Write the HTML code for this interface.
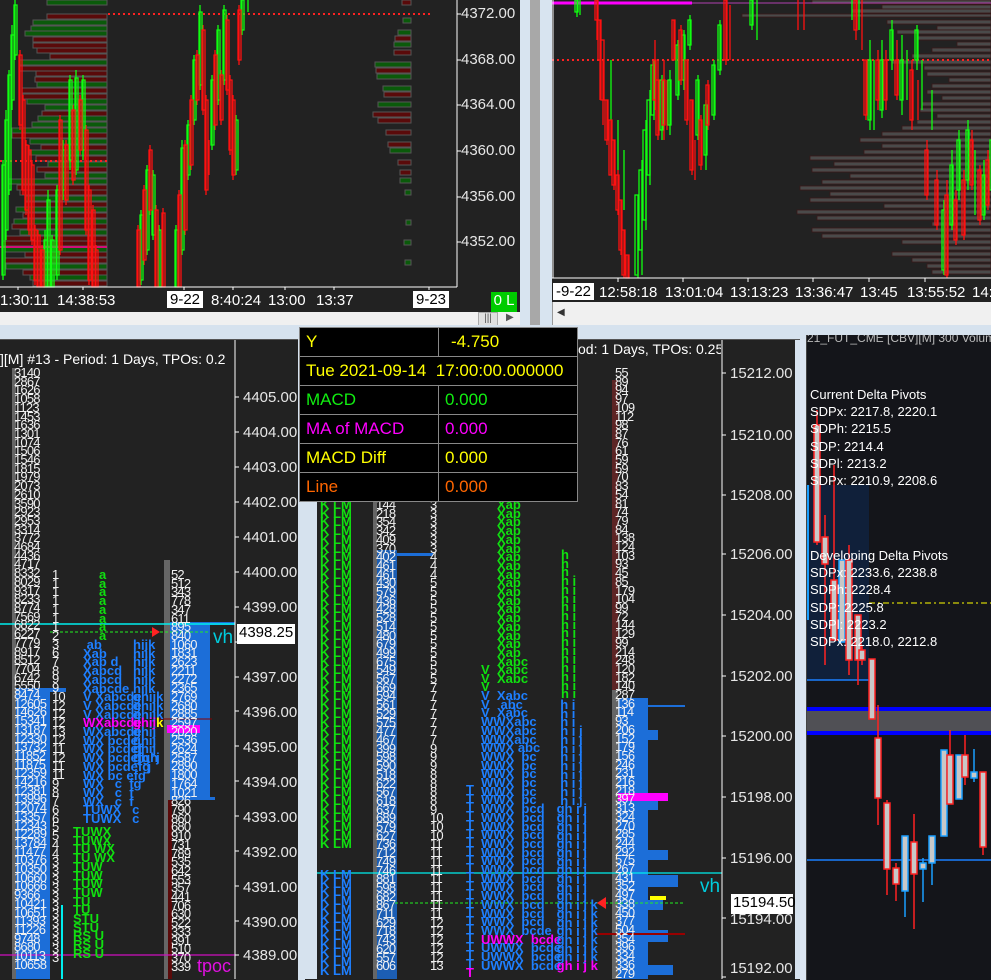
<!DOCTYPE html>
<html style="height:980px;overflow:hidden"><head><meta charset="utf-8">
<style>
*{margin:0;padding:0;box-sizing:border-box}
body{width:991px;height:980px;overflow:hidden;background:#dbe5f1;font-family:"Liberation Sans",sans-serif;position:relative}
.a{position:absolute}
.pl{position:absolute;color:#e6e6e6;font-size:15px;white-space:nowrap}
.tl{position:absolute;color:#fff;font-size:15px;white-space:nowrap;top:292px}
pre{position:absolute;font-family:"Liberation Sans",sans-serif;font-size:13px;line-height:8.7px;white-space:pre;letter-spacing:-0.8px}
.w{color:#f0f0f0}.g{color:#10e010}.b{color:#1e7fff}.y{color:#ffff00}.m{color:#ff00ff}
.L{font-weight:bold;font-size:13px;letter-spacing:0}
.tt td{border:1px solid #888;height:29px;font-size:17px;padding-left:6px;white-space:nowrap}
.clip{position:absolute;overflow:hidden}
</style></head><body>

<!-- TOP LEFT PANE -->
<div class="a" style="left:0;top:0;width:520px;height:312px;background:#222"></div>
<svg class="a" style="left:0;top:0" width="520" height="290">
<g stroke="#555" stroke-width="1">
<rect x="47" y="0" width="60" height="5" fill="#0a5a0a"/><rect x="47" y="14" width="60" height="5" fill="#5a0a0a"/><rect x="33" y="20" width="74" height="5" fill="#0a5a0a"/><rect x="31" y="26" width="76" height="5" fill="#0a5a0a"/><rect x="25" y="31" width="82" height="5" fill="#0a5a0a"/><rect x="33" y="37" width="74" height="5" fill="#5a0a0a"/><rect x="33" y="43" width="74" height="5" fill="#5a0a0a"/><rect x="37" y="48" width="70" height="5" fill="#5a0a0a"/><rect x="50" y="54" width="57" height="5" fill="#5a0a0a"/><rect x="20" y="60" width="87" height="5" fill="#0a5a0a"/><rect x="20" y="66" width="87" height="5" fill="#5a0a0a"/><rect x="36" y="71" width="71" height="5" fill="#5a0a0a"/><rect x="35" y="77" width="72" height="5" fill="#5a0a0a"/><rect x="37" y="82" width="70" height="5" fill="#0a5a0a"/><rect x="22" y="88" width="85" height="5" fill="#5a0a0a"/><rect x="23" y="94" width="84" height="5" fill="#5a0a0a"/><rect x="27" y="99" width="80" height="5" fill="#0a5a0a"/><rect x="45" y="105" width="62" height="5" fill="#0a5a0a"/><rect x="42" y="111" width="65" height="5" fill="#5a0a0a"/><rect x="38" y="116" width="69" height="5" fill="#0a5a0a"/><rect x="32" y="122" width="75" height="5" fill="#0a5a0a"/><rect x="12" y="128" width="95" height="5" fill="#0a5a0a"/><rect x="12" y="133" width="95" height="5" fill="#5a0a0a"/><rect x="30" y="139" width="77" height="5" fill="#0a5a0a"/><rect x="41" y="145" width="66" height="5" fill="#5a0a0a"/><rect x="30" y="150" width="77" height="5" fill="#0a5a0a"/><rect x="36" y="156" width="71" height="5" fill="#5a0a0a"/><rect x="48" y="162" width="59" height="5" fill="#0a5a0a"/><rect x="37" y="167" width="70" height="5" fill="#5a0a0a"/><rect x="45" y="173" width="62" height="5" fill="#0a5a0a"/><rect x="8" y="179" width="99" height="5" fill="#0a5a0a"/><rect x="17" y="185" width="90" height="5" fill="#5a0a0a"/><rect x="20" y="190" width="87" height="5" fill="#5a0a0a"/><rect x="26" y="196" width="81" height="5" fill="#0a5a0a"/><rect x="26" y="202" width="81" height="5" fill="#5a0a0a"/><rect x="16" y="207" width="91" height="5" fill="#0a5a0a"/><rect x="23" y="213" width="84" height="5" fill="#5a0a0a"/><rect x="14" y="219" width="93" height="5" fill="#0a5a0a"/><rect x="12" y="224" width="95" height="5" fill="#5a0a0a"/><rect x="20" y="230" width="87" height="5" fill="#0a5a0a"/><rect x="5" y="236" width="102" height="5" fill="#5a0a0a"/><rect x="3" y="241" width="104" height="5" fill="#5a0a0a"/><rect x="5" y="247" width="102" height="5" fill="#0a5a0a"/><rect x="25" y="252" width="82" height="5" fill="#5a0a0a"/><rect x="5" y="258" width="102" height="5" fill="#5a0a0a"/><rect x="6" y="264" width="101" height="5" fill="#0a5a0a"/><rect x="23" y="270" width="84" height="5" fill="#5a0a0a"/><rect x="30" y="275" width="77" height="5" fill="#0a5a0a"/><rect x="33" y="281" width="74" height="5" fill="#5a0a0a"/>
<rect x="402" y="0" width="9" height="5" fill="#5a0a0a"/><rect x="403" y="18" width="8" height="5" fill="#0a5a0a"/><rect x="398" y="30" width="13" height="5" fill="#0a5a0a"/><rect x="395" y="36" width="16" height="5" fill="#5a0a0a"/><rect x="394" y="42" width="17" height="5" fill="#0a5a0a"/><rect x="394" y="50" width="17" height="5" fill="#5a0a0a"/><rect x="375" y="62" width="36" height="5" fill="#0a5a0a"/><rect x="376" y="68" width="35" height="5" fill="#5a0a0a"/><rect x="377" y="74" width="34" height="5" fill="#0a5a0a"/><rect x="383" y="86" width="28" height="5" fill="#0a5a0a"/><rect x="384" y="92" width="27" height="5" fill="#5a0a0a"/><rect x="378" y="102" width="33" height="5" fill="#0a5a0a"/><rect x="373" y="112" width="38" height="5" fill="#5a0a0a"/><rect x="378" y="118" width="33" height="5" fill="#5a0a0a"/><rect x="386" y="130" width="25" height="5" fill="#5a0a0a"/><rect x="388" y="142" width="23" height="5" fill="#5a0a0a"/><rect x="390" y="148" width="21" height="5" fill="#0a5a0a"/><rect x="398" y="160" width="13" height="5" fill="#5a0a0a"/><rect x="400" y="170" width="11" height="5" fill="#5a0a0a"/><rect x="400" y="178" width="11" height="5" fill="#0a5a0a"/><rect x="405" y="190" width="6" height="5" fill="#0a5a0a"/><rect x="406" y="220" width="5" height="5" fill="#0a5a0a"/><rect x="404" y="240" width="7" height="5" fill="#0a5a0a"/><rect x="405" y="260" width="6" height="5" fill="#0a5a0a"/>
</g>
<line x1="0" y1="247" x2="107" y2="247" stroke="#d0107a" stroke-width="2"/>
<line x1="108" y1="14" x2="430" y2="14" stroke="#f22" stroke-width="2" stroke-dasharray="2,3"/>
<line x1="0" y1="161" x2="108" y2="161" stroke="#f22" stroke-width="2" stroke-dasharray="2,3"/>
<g stroke-width="1.3">
<path stroke="#1f1" d="M3 160V280M6 110V240M9 70V195M12 25V110M15 0V60M45 230V287M48 190V287M52 235V287M57 185V280M63 140V200M70 75V170M76 70V175M83 75V160M141 210V285M147 165V255M153 170V240M159 225V287M176 225V287M182 140V255M188 120V180M194 55V125M200 5V90M212 75V150M218 25V105M224 5V85M236 115V175M242 0V35M248 0V12"/>
<path stroke="#f11" d="M20 50V130M23 95V195M26 140V215M29 145V235M32 160V245M35 225V285M38 230V287M42 245V287M60 115V255M66 140V205M73 105V185M80 95V155M86 125V235M89 185V285M93 205V287M96 245V287M138 225V287M144 185V265M150 145V215M156 205V287M163 208V287M179 190V287M185 140V235M191 95V170M197 50V105M203 25V115M206 95V195M209 140V175M215 50V130M221 70V125M227 15V95M230 75V155M233 95V180M239 5V65"/>
</g>
<g stroke-width="1.3" fill="none">
<path stroke="#1f1" d="M2 165h3v110h-3zM5 120h3v110h-3zM8 75h3v115h-3zM11 35h3v65h-3zM14 5h3v50h-3zM44 240h3v47h-3zM47 200h3v87h-3zM51 240h3v47h-3zM56 190h3v85h-3zM62 150h3v40h-3zM69 80h3v80h-3zM75 78h3v92h-3zM82 80h3v70h-3zM140 215h3v65h-3zM146 170h3v80h-3zM152 175h3v60h-3zM158 230h3v57h-3zM175 230h3v57h-3zM181 148h3v102h-3zM187 125h3v50h-3zM193 60h3v60h-3zM199 12h3v73h-3zM211 80h3v65h-3zM217 30h3v70h-3zM223 10h3v70h-3zM235 120h3v50h-3zM241 0h3v30h-3z"/>
<path stroke="#f11" d="M19 55h3v70h-3zM22 100h3v90h-3zM25 145h3v65h-3zM28 150h3v80h-3zM31 165h3v75h-3zM34 230h3v50h-3zM37 235h3v52h-3zM41 250h3v37h-3zM59 120h3v130h-3zM65 145h3v55h-3zM72 110h3v70h-3zM79 100h3v50h-3zM85 130h3v100h-3zM88 190h3v90h-3zM92 210h3v77h-3zM95 250h3v37h-3zM137 230h3v57h-3zM143 190h3v70h-3zM149 150h3v60h-3zM155 210h3v77h-3zM162 213h3v74h-3zM178 195h3v92h-3zM184 145h3v85h-3zM190 100h3v65h-3zM196 55h3v45h-3zM202 30h3v80h-3zM205 100h3v90h-3zM214 55h3v70h-3zM220 75h3v45h-3zM226 20h3v70h-3zM229 80h3v70h-3zM232 100h3v75h-3zM238 10h3v50h-3z"/>
</g>
<line x1="0" y1="287" x2="457" y2="287" stroke="#fff"/>
<line x1="457" y1="0" x2="457" y2="287" stroke="#fff"/>
<path stroke="#fff" d="M18 287v4M83 287v4M184 287v4M233 287v4M285 287v4M334 287v4M429 287v4M457 14h4M457 60h4M457 105h4M457 151h4M457 197h4M457 242h4"/>
</svg>
<div class="pl" style="left:461px;top:5px">4372.00</div>
<div class="pl" style="left:461px;top:51px">4368.00</div>
<div class="pl" style="left:461px;top:96px">4364.00</div>
<div class="pl" style="left:461px;top:142px">4360.00</div>
<div class="pl" style="left:461px;top:188px">4356.00</div>
<div class="pl" style="left:461px;top:233px">4352.00</div>
<div class="tl" style="left:0">1:30:11</div>
<div class="tl" style="left:57px">14:38:53</div>
<div class="tl" style="left:167px;background:#fff;color:#000;padding:0 3px;top:291px">9-22</div>
<div class="tl" style="left:211px">8:40:24</div>
<div class="tl" style="left:268px">13:00</div>
<div class="tl" style="left:316px">13:37</div>
<div class="tl" style="left:413px;background:#fff;color:#000;padding:0 3px;top:291px">9-23</div>
<div class="a" style="left:491px;top:292px;width:26px;height:20px;background:#0c0;color:#fff;font-size:15px;text-align:center">0 L</div>
<div class="a" style="left:0;top:312px;width:520px;height:15px;background:#f0f0f0"></div>
<div class="a" style="left:478px;top:312px;width:20px;height:14px;background:#e0e0e0;border:1px solid #aaa;font-size:10px;text-align:center;color:#555">|||</div>
<div class="a" style="left:506px;top:312px;font-size:10px;color:#555">▶</div>
<div class="a" style="left:520px;top:0;width:10px;height:330px;background:#d8e4f0"></div>
<div class="a" style="left:530px;top:0;width:10px;height:330px;background:#a8a8a8"></div>
<div class="a" style="left:540px;top:0;width:13px;height:330px;background:#d8e4f0"></div>

<!-- TOP RIGHT PANE -->
<div class="a" style="left:552px;top:0;width:439px;height:302px;background:#222"></div>
<svg class="a" style="left:552px;top:0" width="439" height="290">
<g fill="#4a4a4a" stroke="#3a1818" stroke-width="0.8">
<rect x="260" y="0" width="179" height="4"/><rect x="330" y="5" width="109" height="4"/><rect x="300" y="9" width="139" height="4"/><rect x="190" y="14" width="249" height="3"/><rect x="335" y="20" width="104" height="4"/><rect x="385" y="26" width="54" height="4"/><rect x="345" y="30" width="94" height="4"/><rect x="365" y="36" width="74" height="4"/><rect x="405" y="42" width="34" height="4"/><rect x="380" y="48" width="59" height="4"/><rect x="360" y="54" width="79" height="4"/><rect x="340" y="60" width="99" height="4"/><rect x="372" y="66" width="67" height="4"/><rect x="375" y="72" width="64" height="4"/><rect x="397" y="78" width="42" height="4"/><rect x="380" y="84" width="59" height="4"/><rect x="375" y="90" width="64" height="4"/><rect x="390" y="96" width="49" height="4"/><rect x="370" y="102" width="69" height="4"/><rect x="368" y="108" width="71" height="4"/><rect x="385" y="114" width="54" height="4"/><rect x="365" y="120" width="74" height="4"/><rect x="350" y="126" width="89" height="4"/><rect x="330" y="132" width="109" height="4"/><rect x="308" y="138" width="131" height="4"/><rect x="330" y="144" width="109" height="4"/><rect x="312" y="150" width="127" height="4"/><rect x="258" y="156" width="181" height="4"/><rect x="282" y="162" width="157" height="4"/><rect x="260" y="168" width="179" height="4"/><rect x="298" y="174" width="141" height="4"/><rect x="270" y="180" width="169" height="4"/><rect x="248" y="186" width="191" height="4"/><rect x="278" y="192" width="161" height="4"/><rect x="258" y="198" width="181" height="4"/><rect x="332" y="204" width="107" height="4"/><rect x="245" y="210" width="194" height="4"/><rect x="265" y="216" width="174" height="4"/><rect x="380" y="222" width="59" height="4"/><rect x="260" y="228" width="179" height="4"/><rect x="270" y="234" width="169" height="4"/><rect x="350" y="240" width="89" height="4"/><rect x="390" y="246" width="49" height="4"/><rect x="340" y="252" width="99" height="4"/><rect x="360" y="258" width="79" height="4"/><rect x="375" y="264" width="64" height="4"/><rect x="380" y="270" width="59" height="4"/>
</g>
<line x1="0" y1="3" x2="140" y2="3" stroke="#f0f" stroke-width="3"/>
<line x1="140" y1="3" x2="439" y2="3" stroke="#b040b0" stroke-width="1"/>
<line x1="0" y1="60" x2="439" y2="60" stroke="#f22" stroke-width="2" stroke-dasharray="2,3"/>
<g stroke-width="1.3">
<path stroke="#1f1" d="M25 0V17M28 0V15M59 60V120M66 120V170M72 150V210M86 200V278M90 160V275M94 120V230M98 90V185M102 60V120M110 75V140M118 70V135M126 40V100M132 30V90M138 15V50M146 75V140M154 100V170M162 60V120M168 20V75M200 0V30M205 0V40M300 0V20M307 0V30M318 40V130M322 60V130M330 40V118M340 20V70M350 35V115M355 50V100M365 25V70M370 60V110M380 90V130M392 200V275M400 150V230M407 130V200M416 120V190M423 150V215M432 160V220M440 130V200M447 100V150"/>
<path stroke="#f11" d="M45 0V40M48 20V100M51 60V125M55 100V145M59 120V175M62 140V190M66 170V215M69 200V255M72 230V278M76 255V278M103 40V110M106 60V140M112 60V140M115 80V130M122 20V60M129 25V85M135 60V125M140 100V175M143 140V180M149 115V170M156 80V130M174 0V65M178 5V60M246 0V30M252 0V30M304 0V40M310 0V50M314 60V120M326 50V110M334 50V110M345 40V100M360 60V130M366 80V120M375 140V200M385 170V230M395 180V278M404 190V245M412 170V240M420 130V190M428 165V225M436 150V210"/>
</g>
<g fill="none" stroke-width="1.3">
<path stroke="#1f1" d="M23 0h3v12h-3zM83 195h3v80h-3zM87 170h3v80h-3zM91 130h3v90h-3zM95 100h3v75h-3zM99 65h3v50h-3zM108 80h3v50h-3zM116 80h3v45h-3zM124 45h3v50h-3zM130 35h3v45h-3zM136 20h3v25h-3zM144 80h3v55h-3zM152 105h3v50h-3zM160 65h3v50h-3zM166 25h3v45h-3zM198 0h3v25h-3zM316 60h3v60h-3zM328 60h3v50h-3zM338 30h3v30h-3zM348 60h3v40h-3zM363 30h3v30h-3zM390 210h3v60h-3zM398 165h3v60h-3zM405 140h3v50h-3zM414 130h3v50h-3zM430 175h3v40h-3zM438 140h3v50h-3zM445 110h3v35h-3z"/>
<path stroke="#f11" d="M43 0h3v20h-3zM46 20h3v40h-3zM49 40h3v60h-3zM53 100h3v40h-3zM57 120h3v55h-3zM60 140h3v45h-3zM64 175h3v35h-3zM67 200h3v50h-3zM70 230h3v45h-3zM74 255h3v23h-3zM101 60h3v40h-3zM104 80h3v55h-3zM110 80h3v45h-3zM120 20h3v40h-3zM127 30h3v50h-3zM133 60h3v60h-3zM138 100h3v70h-3zM147 120h3v45h-3zM154 85h3v40h-3zM172 0h3v60h-3zM302 0h3v30h-3zM312 60h3v55h-3zM324 60h3v40h-3zM332 60h3v40h-3zM343 60h3v35h-3zM358 70h3v50h-3zM373 150h3v45h-3zM383 180h3v45h-3zM393 195h3v80h-3zM402 200h3v40h-3zM410 180h3v55h-3zM418 140h3v45h-3zM426 170h3v50h-3zM434 160h3v45h-3z"/>
</g>
<line x1="0" y1="278" x2="439" y2="278" stroke="#fff"/>
<line x1="1" y1="0" x2="1" y2="278" stroke="#fff"/>
<path stroke="#fff" d="M66 278v4M131 278v4M196 278v4M261 278v4M317 278v4M373 278v4"/>
</svg>
<div class="tl" style="left:553px;top:283px;background:#fff;color:#000;padding:0 3px">-9-22</div>
<div class="tl" style="left:599px;top:284px">12:58:18</div>
<div class="tl" style="left:665px;top:284px">13:01:04</div>
<div class="tl" style="left:730px;top:284px">13:13:23</div>
<div class="tl" style="left:795px;top:284px">13:36:47</div>
<div class="tl" style="left:860px;top:284px">13:45</div>
<div class="tl" style="left:907px;top:284px">13:55:52</div>
<div class="tl" style="left:972px;top:284px;width:19px;overflow:hidden">14:</div>
<div class="a" style="left:552px;top:302px;width:439px;height:23px;background:#f0f0f0;border-left:1px solid #999"></div>
<div class="a" style="left:557px;top:307px;font-size:10px;color:#333">◀</div>

<div class="a" style="left:0;top:325px;width:991px;height:14px;background:#d6e2ee"></div>

<!-- BOTTOM LEFT PANE -->
<div class="clip" style="left:0;top:339px;width:300px;height:641px;background:#222;border-top:1px solid #555">
<div class="a" style="left:0;top:11px;color:#fff;font-size:14px;white-space:nowrap">][M]  #13 - Period: 1 Days, TPOs: 0.2</div>
<svg class="a" style="left:0;top:0" width="300" height="639">
<rect x="12" y="28" width="4" height="611" fill="#666"/>
<rect x="16" y="348" width="34" height="291" fill="#1c6ed8"/>
<rect x="16" y="348" width="50" height="4" fill="#1c6ed8"/>
<rect x="164" y="220" width="6" height="419" fill="#666"/>
<rect x="170" y="282" width="40" height="176" fill="#1c6ed8"/>
<rect x="170" y="282" width="65" height="3" fill="#1c6ed8"/>
<rect x="170" y="457" width="45" height="3" fill="#1c6ed8"/>
<rect x="167" y="385" width="33" height="8" fill="#f0f"/>
<rect x="168" y="460" width="4" height="179" fill="#5a0a0a"/>
<line x1="0" y1="284" x2="235" y2="284" stroke="#0ee" stroke-width="1.5"/>
<line x1="50" y1="292" x2="210" y2="292" stroke="#2e2" stroke-dasharray="3,2"/>
<line x1="155" y1="379" x2="212" y2="379" stroke="#800"/>
<line x1="0" y1="615" x2="235" y2="615" stroke="#d010c0" stroke-width="1.2"/>
<line x1="62" y1="565" x2="62" y2="639" stroke="#0ee" stroke-width="2"/>
<polygon points="160,292 152,287 152,297" fill="#f22"/>
<line x1="235" y1="0" x2="235" y2="639" stroke="#fff"/>
<path stroke="#fff" d="M235 57h4M235 92h4M235 127h4M235 162h4M235 197h4M235 232h4M235 267h4M235 302h4M235 337h4M235 371h4M235 406h4M235 441h4M235 476h4M235 511h4M235 546h4M235 581h4M235 615h4"/>
<rect x="298" y="0" width="2" height="639" fill="#d6e2ee"/>
</svg>
<pre class="w" style="left:14px;top:29px">3140
2867
1626
1058
1123
1453
1636
1301
1074
1506
1546
1815
1979
2073
2610
3590
2923
2953
3314
3772
4684
4436
4717
8332
8029
9317
8233
8774
7569
6822
6227
7779
8917
8512
7704
6742
5550
8474
12605
14626
15341
13187
12330
13732
11852
11875
12359
14216
12381
13996
12074
13357
12343
12289
13784
11477
10376
10350
10660
10666
9366
10421
10651
11393
11226
9748
8680
10113
10658</pre>
<pre class="w" style="left:52px;top:231px">1
1
1
1
1
1
1
2
3
6
7
8
9
9
10
12
12
12
13
12
11
12
11
11
9
8
7
6
6
5
5
4
4
3
3
3
3
3
3
3
3
3
3
3
3</pre>
<pre class="g L" style="left:99px;top:231px">a
a
a
a
a
a
a
a</pre>
<pre class="b L" style="left:83px;top:301px"> ab
Xab
Xab d
Xabcd
Xabcd
Xabcde
V Xabcde
V Xabcde
V Xabcde
<span class="m">WXabcde</span>
WXabcde
WX bcde
WX bcdef
WX bcdefgh
WX bcdefg
WX bc efg
WX   c  fg
WX   c  f
WX   c  f
TUWX   c
TUWX   c</pre>
<pre class="b L" style="left:133px;top:301px">hijk
hijk
hijk
hijk
hijk
hijk
ghijk
ghijk
ghijk
<span class="m">ghij</span><span class="y">k</span>
ghij
ghij
ghij
gh  j
    j</pre>
<pre class="g L" style="left:73px;top:488px">TUWX
TUWX
TU WX
TU WX
TUW
TUW
TUW
TUW
TU
TU
STU
STU
RS U
RS U
RS U</pre>
<pre class="w" style="left:171px;top:231px">52
512
343
778
347
611
895
840
1060
1831
2623
2211
2272
2365
2769
2680
2885
2597
2020
2536
2624
2587
2890
1800
1764
1021
826
790
860
680
910
731
789
535
642
553
357
441
706
630
522
333
391
510
370
339</pre>
<div class="a" style="left:237px;top:284px;width:58px;height:20px;background:#fff;color:#000;font-size:15px;padding-left:2px">4398.25</div>
<div class="a" style="left:213px;top:287px;color:#0cd;font-size:19px">vh</div>
<div class="a" style="left:197px;top:616px;color:#e010e0;font-size:18px;line-height:20px">tpoc</div>
<div class="pl" style="left:243px;top:49px">4405.00</div>
<div class="pl" style="left:243px;top:84px">4404.00</div>
<div class="pl" style="left:243px;top:119px">4403.00</div>
<div class="pl" style="left:243px;top:154px">4402.00</div>
<div class="pl" style="left:243px;top:189px">4401.00</div>
<div class="pl" style="left:243px;top:224px">4400.00</div>
<div class="pl" style="left:243px;top:259px">4399.00</div>
<div class="pl" style="left:243px;top:329px">4397.00</div>
<div class="pl" style="left:243px;top:364px">4396.00</div>
<div class="pl" style="left:243px;top:399px">4395.00</div>
<div class="pl" style="left:243px;top:434px">4394.00</div>
<div class="pl" style="left:243px;top:469px">4393.00</div>
<div class="pl" style="left:243px;top:504px">4392.00</div>
<div class="pl" style="left:243px;top:539px">4391.00</div>
<div class="pl" style="left:243px;top:574px">4390.00</div>
<div class="pl" style="left:243px;top:607px">4389.00</div>
</div>
<div class="a" style="left:298px;top:339px;width:7px;height:641px;background:#d6e2ee"></div>

<!-- MIDDLE PANE -->
<div class="clip" style="left:305px;top:339px;width:495px;height:641px;background:#222;border-top:1px solid #555">
<div class="a" style="left:0;top:0;width:12px;height:639px;background:#d6e2ee"></div>
<div class="a" style="left:273px;top:1px;color:#fff;font-size:14px;white-space:nowrap;width:143px;overflow:hidden">od: 1 Days, TPOs: 0.25 x</div>
<svg class="a" style="left:0;top:0" width="495" height="639">
<rect x="68" y="20" width="4" height="619" fill="#666"/>
<rect x="72" y="210" width="20" height="429" fill="#1c6ed8" opacity="0.8"/>
<rect x="92" y="213" width="36" height="3" fill="#1c6ed8"/>
<rect x="307" y="40" width="6" height="599" fill="#666"/>
<rect x="307" y="40" width="6" height="310" fill="#5a0a0a" opacity="0.7"/>
<rect x="313" y="358" width="30" height="281" fill="#1c6ed8"/>
<path fill="#1c6ed8" d="M313 390h40v10h-40zM313 430h30v8h-30zM313 460h40v10h-40zM313 510h50v10h-50zM313 535h60v12h-60zM313 560h45v10h-45zM313 590h50v12h-50zM313 625h55v10h-55z"/>
<rect x="313" y="453" width="50" height="8" fill="#f0f"/>
<rect x="345" y="556" width="16" height="4" fill="#ff0"/>
<line x1="313" y1="366" x2="380" y2="366" stroke="#1c6ed8" stroke-width="2"/>
<line x1="12" y1="533" x2="417" y2="533" stroke="#0ee" stroke-width="1.2"/>
<line x1="90" y1="563" x2="380" y2="563" stroke="#2e2" stroke-dasharray="3,2"/>
<line x1="290" y1="594" x2="380" y2="594" stroke="#900" stroke-width="2"/>
<polygon points="292,563 301,557 301,569" fill="#f22"/>
<line x1="417" y1="0" x2="417" y2="639" stroke="#fff"/>
<path stroke="#fff" d="M417 33h4M417 95h4M417 155h4M417 214h4M417 275h4M417 336h4M417 396h4M417 457h4M417 518h4M417 578h4M417 637h4"/>
<rect x="490" y="0" width="5" height="639" fill="#d6e2ee"/>
</svg>
<pre class="g L" style="left:15px;top:161px">K LM
K LM
K LM
K LM
K LM
K LM
K LM
K LM
K LM
K LM
K LM
K LM
K LM
K LM
K LM
K LM
K LM
K LM
K LM
K LM
K LM
K LM
K LM
K LM
K LM
K LM
K LM
K LM
K LM
K LM
K LM
K LM
K LM
K LM
K LM
K LM
K LM
K LM
K LM
K LM</pre>
<pre class="b L" style="left:15px;top:531px">K LM
K LM
K LM
K LM
K LM
K LM
K LM
K LM
K LM
K LM
K LM
K LM</pre>
<pre class="w" style="left:71px;top:161px">144
218
354
342
409
370
402
461
461
430
579
436
428
528
514
480
679
499
675
549
567
669
594
561
529
575
477
467
399
598
590
518
622
567
618
637
689
579
627
736
712
749
746
881
598
682
867
711
629
718
743
620
557
606</pre>
<pre class="w" style="left:125px;top:161px">3
3
3
3
3
3
4
4
4
5
5
5
5
5
5
5
5
5
5
5
5
7
7
7
7
7
7
7
9
9
9
8
8
8
8
9
10
10
10
11
11
11
11
11
11
11
11
11
12
12
12
12
12
13</pre>
<pre class="g L" style="left:192px;top:161px">Xab
Xab
Xab
Xab
Xab
Xab
Xab
Xab
Xab
Xab
Xab
Xab
Xab
Xab
Xab
Xab
Xab
Xab
Xabc
Xabc
Xabc</pre>
<pre class="g L" style="left:176px;top:326px">V
V
V</pre>
<pre class="b L" style="left:176px;top:352px">V  Xabc
V   abc
V  Xabc
WWXabc
WWXabc
WWXabc
WWX abc
WWX  bc
WWX  bc
WWX  bc
WWX  bc
WWX  bc
WWX  bc
WWX  bcd
WWX  bcd
WWX  bcd
WWX  bcd
WWX  bcd
WWX  bcd
WWX  bcd
WWX  bcd
WWX  bcd
WWX  bcd
WWX  bcd
WWX  bcd
WWX  bcd
WWX  bcd
WWX  bcde
<span class="m">UWWX  bcde</span>
UWWX  bcde
UWWX  bcde
UWWX  bcde</pre>
<pre class="b L" style="left:161px;top:446px">T
T
T
T
T
T
T
T
T
T
T
T
T
T
T
T
T
T
T
T
T
<span class="m">T</span></pre>
<pre class="g L" style="left:256px;top:211px">h
h
h
h i
h i
h i
h i
h i
h i
h i
h i
h i
h i
h i
h i
h i
h i</pre>
<pre class="b L" style="left:248px;top:361px">  h i
  h i
  h i
  h i j
  h i j
  h i j
  h i j
  h i j
  h i j
  h i j
  h i j
  h i j
 gh i j
 gh i j
 gh i j
 gh i j
 gh i j
 gh i j
 gh i j
 gh i j
 gh i j
 gh i j
 gh i j
 gh i j k
 gh i j k
 gh i j k
 gh i j k
 gh i j k
 gh i j k
 gh i j k
 <span class="m">gh i j k</span></pre>
<pre class="w" style="left:310px;top:29px">55
89
94
97
109
112
98
87
76
61
59
59
70
83
54
81
74
79
84
138
124
103
93
45
85
179
104
99
72
144
129
99
214
248
120
182
140
287
136
114
93
206
152
179
156
246
231
216
218
397
313
324
270
285
244
292
575
267
431
352
497
338
450
377
504
354
396
334
336
279</pre>
<div class="a" style="left:426px;top:554px;width:62px;height:20px;background:#fff;color:#000;font-size:15px;padding-left:2px">15194.50</div>
<div class="a" style="left:395px;top:536px;color:#0cd;font-size:19px">vh</div>
<div class="pl" style="left:425px;top:25px">15212.00</div>
<div class="pl" style="left:425px;top:87px">15210.00</div>
<div class="pl" style="left:425px;top:147px">15208.00</div>
<div class="pl" style="left:425px;top:206px">15206.00</div>
<div class="pl" style="left:425px;top:267px">15204.00</div>
<div class="pl" style="left:425px;top:328px">15202.00</div>
<div class="pl" style="left:425px;top:388px">15200.00</div>
<div class="pl" style="left:425px;top:449px">15198.00</div>
<div class="pl" style="left:425px;top:510px">15196.00</div>
<div class="pl" style="left:425px;top:571px">15194.00</div>
<div class="pl" style="left:425px;top:620px;line-height:18px">15192.00</div>
</div>

<!-- RIGHT PANE -->
<div class="clip" style="left:806px;top:335px;width:185px;height:645px;background:#14151a;border-left:1px solid #444">
<div class="a" style="left:0;top:-4px;color:#bbb;font-size:12px;white-space:nowrap;width:184px;overflow:hidden">21_FUT_CME [CBV][M]  300 Volume</div>
<svg class="a" style="left:0;top:0" width="184" height="645">
<rect x="0" y="150" width="62" height="195" fill="#10203a"/>
<line x1="0" y1="345" x2="62" y2="345" stroke="#1a7fff" stroke-width="1.5"/>
<line x1="0" y1="525" x2="184" y2="525" stroke="#1a7fff" stroke-width="1.5"/>
<line x1="62" y1="268" x2="184" y2="268" stroke="#ff0" stroke-dasharray="6,3,2,3"/>
<rect x="0" y="375" width="184" height="22" fill="#505055"/>
<rect x="0" y="372" width="184" height="4" fill="#00f"/>
<rect x="0" y="396" width="184" height="4" fill="#00f"/>
<line x1="1" y1="150" x2="1" y2="285" stroke="#1a9fff" stroke-width="2"/>
<g fill="#c8c8c8" stroke-width="1.5">
<path stroke="#f22" d="M10 75V210"/><rect x="7" y="90" width="6" height="117" stroke="#f22"/>
<path stroke="#f22" d="M18 180V330"/><rect x="15" y="202" width="6" height="27" stroke="#f22"/>
<path stroke="#f22" d="M27 130V290"/><rect x="24" y="245" width="6" height="60" stroke="#f22"/>
<rect x="32" y="225" width="6" height="82" stroke="#1a9fff"/>
<path stroke="#f22" d="M42 210V340"/><rect x="39" y="225" width="6" height="100" stroke="#f22"/>
<path stroke="#f22" d="M51 280V350"/><rect x="48" y="280" width="6" height="45" stroke="#f22"/>
<path stroke="#f22" d="M55 310V330"/><rect x="52" y="315" width="6" height="10" stroke="#f22"/>
<rect x="62" y="324" width="6" height="60" stroke="#f22"/>
<path stroke="#f22" d="M71 370V490"/><rect x="68" y="403" width="6" height="60" stroke="#f22"/>
<path stroke="#f22" d="M80 465V560"/><rect x="77" y="468" width="6" height="66" stroke="#f22"/>
<path stroke="#f22" d="M89 528V566"/><rect x="86" y="533" width="6" height="16" stroke="#f22"/>
<path stroke="#1a9fff" d="M98 550V582"/><rect x="95" y="501" width="6" height="55" stroke="#1a9fff"/>
<path stroke="#f22" d="M107 479V594"/><rect x="104" y="507" width="6" height="32" stroke="#f22"/>
<path stroke="#1a9fff" d="M116 523V567"/><rect x="113" y="528" width="6" height="6" stroke="#1a9fff"/>
<path stroke="#1a9fff" d="M125 520V550"/><rect x="122" y="501" width="6" height="27" stroke="#1a9fff"/>
<rect x="134" y="415" width="6" height="86" stroke="#1a9fff"/>
<path stroke="#f22" d="M143 395V420"/><rect x="140" y="420" width="6" height="49" stroke="#f22"/>
<rect x="149" y="420" width="6" height="44" stroke="#1a9fff"/>
<path stroke="#f22" d="M158 400V450"/><rect x="155" y="420" width="6" height="22" stroke="#f22"/>
<path stroke="#1a9fff" d="M167 414V447"/><rect x="164" y="437" width="6" height="6" stroke="#1a9fff"/>
<path stroke="#f22" d="M176 500V520"/><rect x="173" y="437" width="6" height="75" stroke="#f22"/>
</g>
</svg>
<div class="a" style="left:3px;top:51px;color:#fff;font-size:13px;line-height:17.2px;white-space:nowrap">Current Delta Pivots<br>SDPx: 2217.8, 2220.1<br>SDPh: 2215.5<br>SDP: 2214.4<br>SDPl: 2213.2<br>SDPx: 2210.9, 2208.6</div>
<div class="a" style="left:3px;top:212px;color:#fff;font-size:13px;line-height:17.2px;white-space:nowrap">Developing Delta Pivots<br>SDPx: 2233.6, 2238.8<br>SDPh: 2228.4<br>SDP: 2225.8<br>SDPl: 2223.2<br>SDPx: 2218.0, 2212.8</div>
</div>

<!-- TOOLTIP -->
<table class="tt a" style="left:299px;top:327px;width:279px;border-collapse:collapse;background:#000">
<tr><td style="color:#ff0;width:139px">Y</td><td style="color:#ff0;padding-left:12px">-4.750</td></tr>
<tr><td colspan="2" style="color:#ff0">Tue 2021-09-14&nbsp; 17:00:00.000000</td></tr>
<tr><td style="color:#1e1">MACD</td><td style="color:#1e1">0.000</td></tr>
<tr><td style="color:#f0f">MA of MACD</td><td style="color:#f0f">0.000</td></tr>
<tr><td style="color:#ff0">MACD Diff</td><td style="color:#ff0">0.000</td></tr>
<tr><td style="color:#f60">Line</td><td style="color:#f60">0.000</td></tr>
</table>
</body></html>
